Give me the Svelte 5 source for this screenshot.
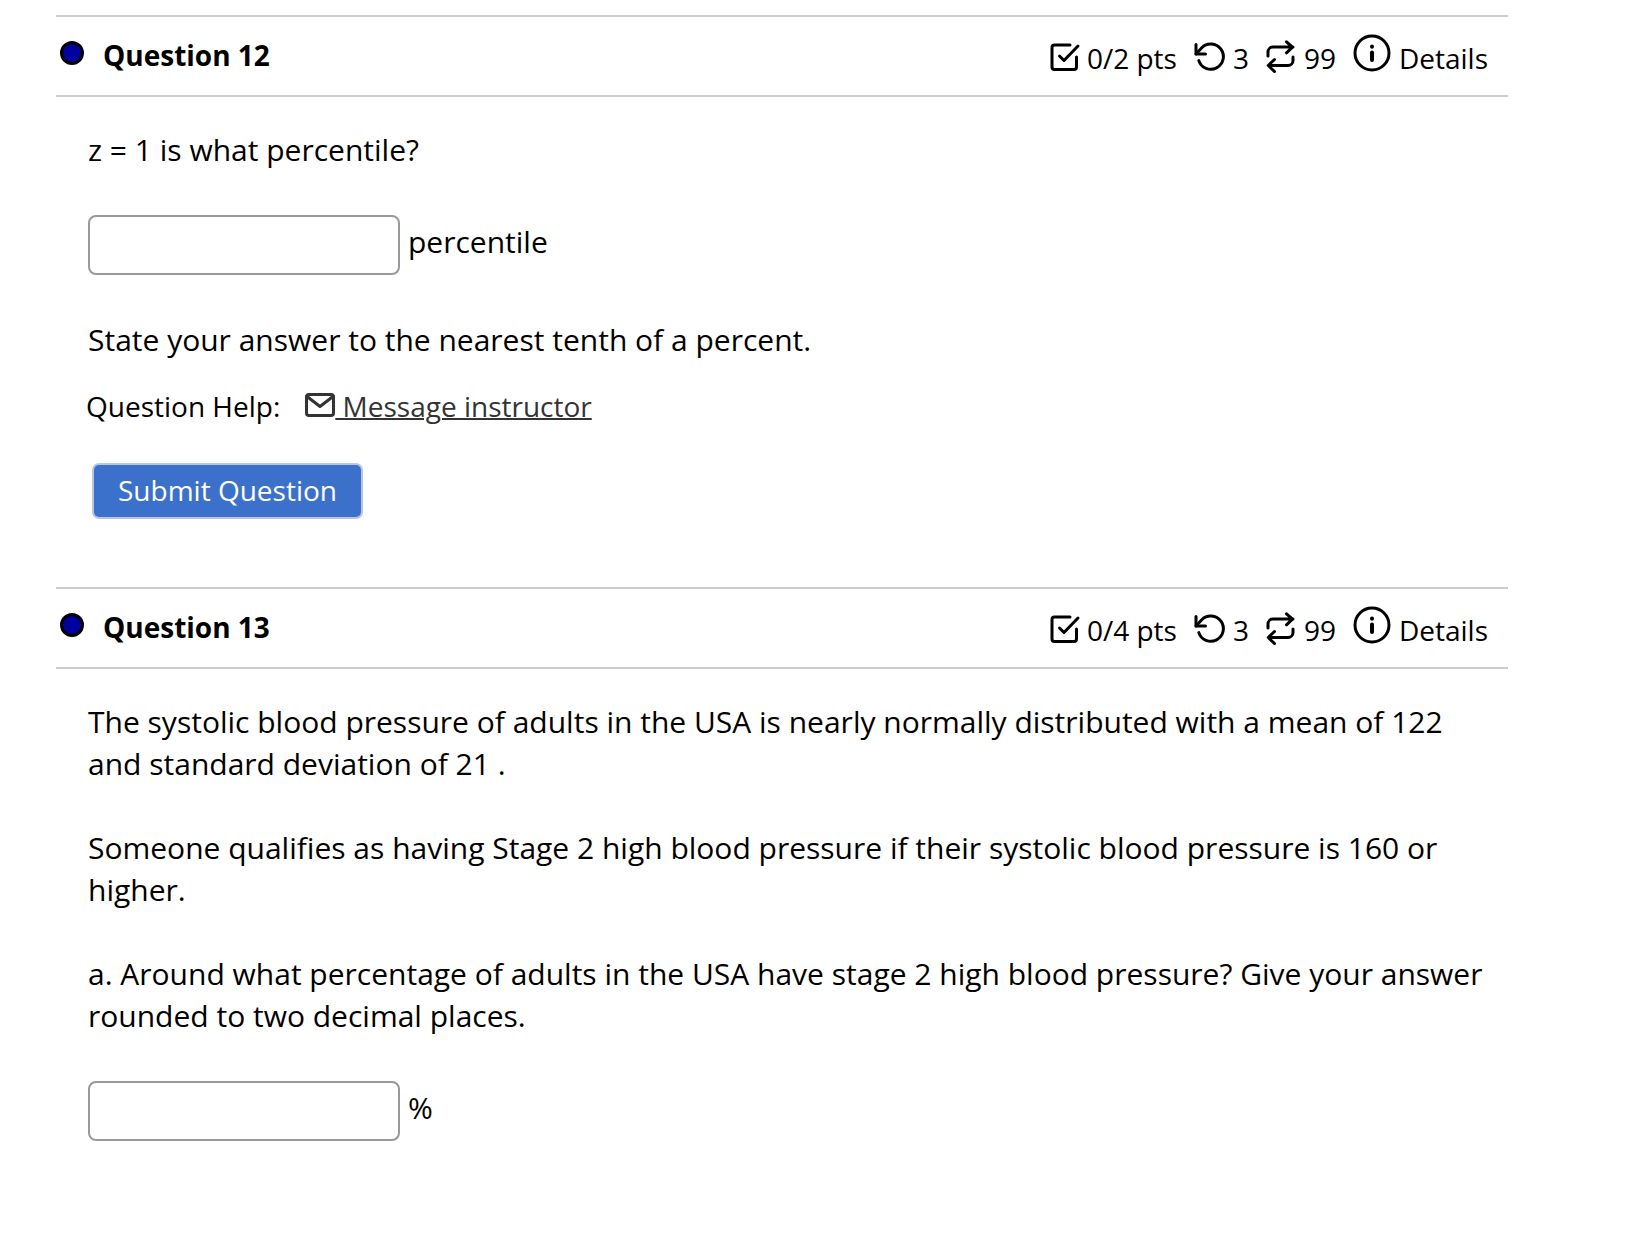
<!-- App.svelte -->
<script lang="ts">
	type Question = {
		number: number;
		points: number;
		paragraphs: string[];
		unit: string;
		note?: string;
		showActions?: boolean;
	};

	const questions: Question[] = [
		{
			number: 12,
			points: 2,
			paragraphs: ['z = 1 is what percentile?'],
			unit: 'percentile',
			note: 'State your answer to the nearest tenth of a percent.',
			showActions: true
		},
		{
			number: 13,
			points: 4,
			paragraphs: [
				'The systolic blood pressure of adults in the USA is nearly normally distributed with a mean of 122 and standard deviation of 21 .',
				'Someone qualifies as having Stage 2 high blood pressure if their systolic blood pressure is 160 or higher.',
				'a. Around what percentage of adults in the USA have stage 2 high blood pressure? Give your answer rounded to two decimal places.'
			],
			unit: '%'
		}
	];

	let answers: Record<number, string> = $state({ 12: '', 13: '' });
</script>

<main>
	{#each questions as question}
		<section class="question">
			<header>
				<span class="status-dot"></span>
				<h2>Question {question.number}</h2>
				<div class="score">
					<span class="score-item">
						<svg width="28" height="28" viewBox="1 0 28 28" aria-hidden="true">
							<path d="M20 2H4.500a2.500 2.500 0 0 0-2.500 2.500v19.500a2.500 2.500 0 0 0 2.500 2.500h19.500a2.500 2.500 0 0 0 2.500-2.500V14" />
							<path d="M9.500 13l4.500 4.500L28 3" />
						</svg>
						<span>0/{question.points} pts</span>
					</span>
					<span class="score-item">
						<svg width="31" height="28" viewBox="0 0 31 28" aria-hidden="true">
							<path d="M2 1.500v9.500h9.500" />
							<path d="M2 11l5.800-6.200a12.600 12.600 0 1 1-3 12.800" />
						</svg>
						<span>3</span>
					</span>
					<span class="score-item">
						<svg width="30" height="32" viewBox="0 0 30 32" aria-hidden="true">
							<path d="M2 15v-4a5 5 0 0 1 5-5h20M20.500 0.800L26.500 6.200l-6 5.600" />
							<path d="M27 16v3.500a5 5 0 0 1-5 5H2.500M8.500 18.500L2.200 24.500l6.300 6" />
						</svg>
						<span>99</span>
					</span>
					<button type="button" class="details">
						<svg width="38" height="38" viewBox="0 0 38 38" aria-hidden="true">
							<circle cx="19" cy="19" r="17" />
							<path d="M19 18.500v7.500M19 12.500v.200" stroke-width="4" />
						</svg>
						<span>Details</span>
					</button>
				</div>
			</header>

			<div class="body">
				{#each question.paragraphs as paragraph}
					<p>{paragraph}</p>
				{/each}
				<label class="answer">
					<input type="text" autocomplete="off" bind:value={answers[question.number]} />
					<span>{question.unit}</span>
				</label>
				{#if question.note}
					<p>{question.note}</p>
				{/if}
			</div>

			{#if question.showActions}
				<div class="help">
					<span>Question Help:</span>
					<a href="#message">
						<svg width="30" height="24" viewBox="0 0 30 24" aria-hidden="true">
							<rect x="1.500" y="1.500" width="27" height="21" rx="2.500" />
							<path d="M2 3.500l13 10 13-10" />
						</svg>
						Message instructor
					</a>
				</div>
				<button type="button" class="submit">Submit Question</button>
			{/if}
		</section>
	{/each}
</main>

<style>
	:global(body) {
		margin: 0;
		background: #fff;
	}

	main {
		padding: 15px 120px 42px 56px;
		font-family: 'Open Sans', 'Noto Sans', sans-serif;
		font-size: 30px;
		font-kerning: none;
		line-height: 42px;
		color: #000;
	}

	svg {
		flex: none;
		overflow: visible;
		fill: none;
		stroke: currentColor;
		stroke-width: 3;
		stroke-linecap: round;
		stroke-linejoin: round;
	}

	.question {
		margin-bottom: 68px;
	}

	header {
		display: flex;
		align-items: center;
		height: 78px;
		padding: 0 20px 0 4px;
		border-top: 2px solid #ccc;
		border-bottom: 2px solid #ccc;
		font-size: 28px;
		line-height: 40px;
	}

	.status-dot {
		box-sizing: border-box;
		width: 24px;
		height: 24px;
		margin: 0 19px 6px 0;
		border: 3px solid #000;
		border-radius: 50%;
		background: #00009f;
	}

	h2 {
		margin: 0 0 2px;
		font-size: 28px;
		font-weight: 700;
	}

	.score {
		display: flex;
		align-items: center;
		gap: 17px;
		margin-left: auto;
		padding-top: 4px;
	}

	.score-item,
	.details {
		display: flex;
		align-items: center;
		gap: 8px;
	}

	.score-item svg {
		margin-bottom: 2px;
	}

	.details {
		padding: 0;
		border: 0;
		background: none;
		font: inherit;
		font-kerning: inherit;
		color: inherit;
		cursor: pointer;
	}

	.details svg {
		margin-bottom: 10px;
	}

	.body {
		padding: 32px 20px 0 32px;
	}

	p {
		margin: 0 0 42px;
	}

	.answer {
		display: flex;
		align-items: center;
		gap: 8px;
		margin: 44px 0;
	}

	.answer span {
		padding-bottom: 6px;
	}

	input {
		box-sizing: border-box;
		width: 312px;
		height: 60px;
		padding: 8px 12px;
		border: 2px solid #999;
		border-radius: 8px;
		font: inherit;
	}

	p:last-child {
		margin-bottom: 24px;
	}

	.help {
		display: flex;
		gap: 25px;
		padding-left: 30px;
		font-size: 28px;
	}

	a {
		color: #333;
		text-decoration: underline;
		text-decoration-thickness: 2px;
	}

	.submit {
		margin: 36px 0 0 36px;
		padding: 6px 24px 7px;
		border: 2px solid #b9c7dc;
		border-radius: 7px;
		background: #3b71ca;
		font: inherit;
		font-kerning: inherit;
		font-size: 28px;
		line-height: 39px;
		color: #fff;
		cursor: pointer;
	}
</style>
